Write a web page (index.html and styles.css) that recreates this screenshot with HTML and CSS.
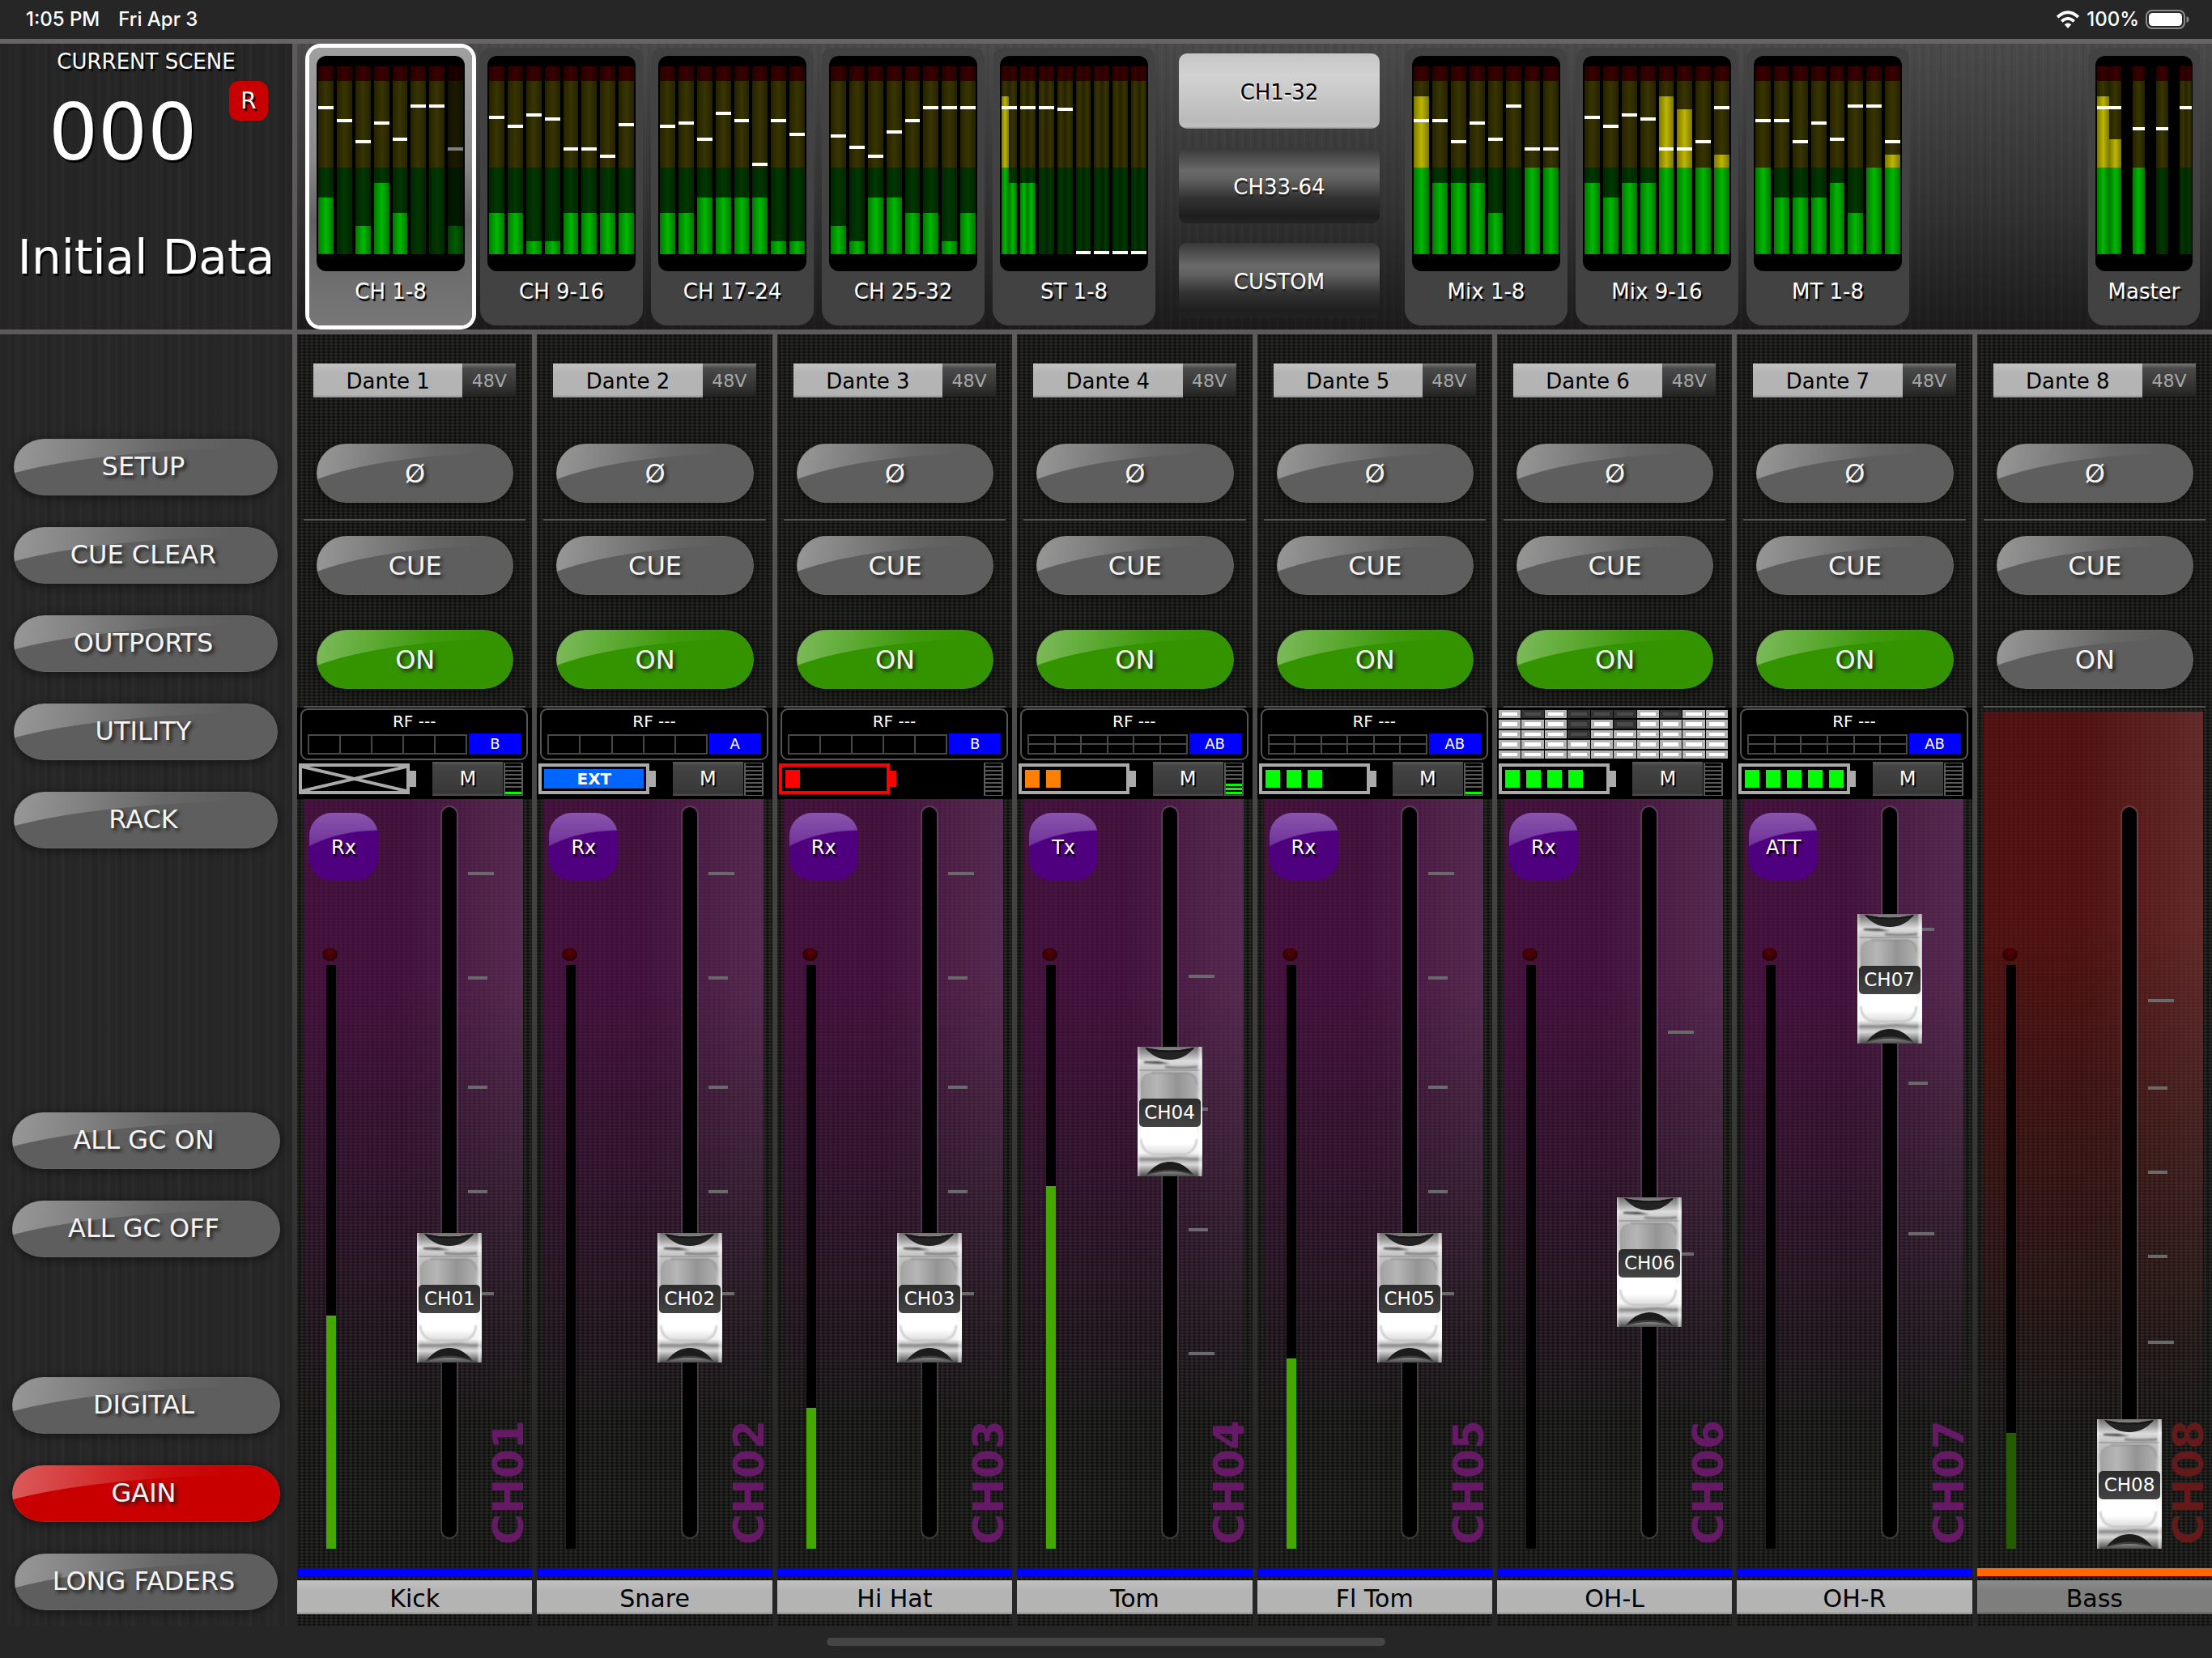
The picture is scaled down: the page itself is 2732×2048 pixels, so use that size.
FILE: index.html
```html
<!DOCTYPE html>
<html lang="en">
<head>
<meta charset="utf-8">
<meta name="viewport" content="width=device-width, initial-scale=1">
<title>Mixer</title>
<link rel="stylesheet" href="styles.css">
</head>
<body>
<svg class="defs" width="0" height="0" aria-hidden="true">
  <defs>
    <linearGradient id="capBody" x1="0" y1="0" x2="0" y2="1">
      <stop offset="0" stop-color="#6e6e6e"/>
      <stop offset=".05" stop-color="#9a9a9a"/>
      <stop offset=".11" stop-color="#dcdcdc"/>
      <stop offset=".17" stop-color="#c4c4c4"/>
      <stop offset=".3" stop-color="#b4b4b4"/>
      <stop offset=".45" stop-color="#c8c8c8"/>
      <stop offset=".62" stop-color="#f2f2f2"/>
      <stop offset=".7" stop-color="#ffffff"/>
      <stop offset=".82" stop-color="#f4f4f4"/>
      <stop offset=".87" stop-color="#aaaaaa"/>
      <stop offset=".91" stop-color="#d8d8d8"/>
      <stop offset=".96" stop-color="#8a8a8a"/>
      <stop offset="1" stop-color="#4c4c4c"/>
    </linearGradient>
    <linearGradient id="capUpper" x1="0" y1="0" x2="1" y2="0">
      <stop offset="0" stop-color="#a2a2a2"/>
      <stop offset=".3" stop-color="#b6b6b6"/>
      <stop offset=".65" stop-color="#949494"/>
      <stop offset="1" stop-color="#b0b0b0"/>
    </linearGradient>
    <linearGradient id="capLower" x1="0" y1="0" x2="0" y2="1">
      <stop offset="0" stop-color="#ffffff"/>
      <stop offset=".6" stop-color="#ffffff"/>
      <stop offset="1" stop-color="#dadada"/>
    </linearGradient>
    <linearGradient id="capEdge" x1="0" y1="0" x2="1" y2="0">
      <stop offset="0" stop-color="#fff" stop-opacity=".55"/>
      <stop offset=".05" stop-color="#fff" stop-opacity="0"/>
      <stop offset=".92" stop-color="#fff" stop-opacity="0"/>
      <stop offset=".97" stop-color="#fff" stop-opacity=".6"/>
      <stop offset="1" stop-color="#fff" stop-opacity=".2"/>
    </linearGradient>
    <filter id="capSoft" filterUnits="userSpaceOnUse" x="0" y="0" width="80" height="160"><feGaussianBlur stdDeviation="1.3"/></filter>
    <symbol id="cap" viewBox="0 0 80 160">
      <rect width="80" height="160" fill="url(#capBody)"/>
      <path d="M8 18H26L40 21H24L8 20Z" fill="#3c3c3c" filter="url(#capSoft)"/>
      <path d="M34 25Q50 27 74 25" fill="none" stroke="#808080" stroke-width="3" filter="url(#capSoft)"/>
      <path d="M2 29H78" stroke="#9a9a9a" stroke-width="1.500"/>
      <path d="M4 64V44Q5 33 17 32H62Q72 34 73 46V64Z" fill="url(#capUpper)"/>
      <path d="M17 32H62Q72 34 73 46" fill="none" stroke="#8a8a8a" stroke-width="1.500" filter="url(#capSoft)"/>
      <path d="M4 99H73V113Q71 131 58 133H20Q6 131 4 114Z" fill="url(#capLower)"/>
      <path d="M4 114Q6 131 20 133H58Q71 131 73 114" fill="none" stroke="#bcbcbc" stroke-width="2" filter="url(#capSoft)"/>
      <path d="M2 139H30Q50 136 66 139H78" fill="none" stroke="#8c8c8c" stroke-width="3" filter="url(#capSoft)"/>
      <rect width="80" height="160" fill="url(#capEdge)"/>
      <path d="M9 1Q21 16 40 16Q58 16 70 1Q40 8 9 1Z" fill="#232323"/>
      <path d="M9 1Q40 8 70 1L68 4Q40 9 12 4Z" fill="#161616"/>
      <path d="M12 157Q24 142 40 142Q56 142 68 157Q40 149 12 157Z" fill="#1c1c1c"/>
      <path d="M10 159Q40 149 70 159L68 157Q40 146 12 157Z" fill="#3c3c3c"/>
    </symbol>
  </defs>
</svg>

<header class="status">
  <div class="status-left"><span>1:05 PM</span><span>Fri Apr 3</span></div>
  <div class="status-right">
    <svg class="wifi" viewBox="0 0 30 22" aria-label="Wi-Fi">
      <path d="M15 22L10.800 17.200Q15 13.800 19.200 17.200Z" fill="#fff"/>
      <path d="M7.300 13.400Q15 6.400 22.700 13.400" fill="none" stroke="#fff" stroke-width="3.600"/>
      <path d="M2.200 8.200Q15 -3.600 27.800 8.200" fill="none" stroke="#fff" stroke-width="3.800"/>
    </svg>
    <span>100%</span>
    <svg class="power" viewBox="0 0 54 24" aria-label="Battery">
      <rect x="1" y="1" width="47" height="22" rx="7" fill="none" stroke="#8a8a8a" stroke-width="2"/>
      <rect x="4" y="4" width="41" height="16" rx="4.500" fill="#fff"/>
      <path d="M50.500 8Q53.500 9 53.500 12T50.500 16Z" fill="#8a8a8a"/>
    </svg>
  </div>
</header>

<main class="console">
  <section class="scene">
    <h1 class="scene-title">CURRENT SCENE</h1>
    <div class="scene-row">
      <span class="scene-number">000</span>
      <span class="scene-flag">R</span>
    </div>
    <p class="scene-name">Initial Data</p>
  </section>

  <section class="banks">
    <div class="bank-group" id="inputBanks"></div>
    <div class="pages">
      <button type="button" class="page page-on">CH1-32</button>
      <button type="button" class="page">CH33-64</button>
      <button type="button" class="page">CUSTOM</button>
    </div>
    <div class="bank-group" id="outputBanks"></div>
    <div class="bank-group bank-master" id="masterBank"></div>
  </section>

  <nav class="side">
    <div class="side-top">
      <button type="button" class="pill">SETUP</button>
      <button type="button" class="pill">CUE CLEAR</button>
      <button type="button" class="pill">OUTPORTS</button>
      <button type="button" class="pill">UTILITY</button>
      <button type="button" class="pill">RACK</button>
    </div>
    <div class="side-mid">
      <button type="button" class="pill">ALL GC ON</button>
      <button type="button" class="pill">ALL GC OFF</button>
    </div>
    <div class="side-end">
      <button type="button" class="pill">DIGITAL</button>
      <button type="button" class="pill pill-red">GAIN</button>
      <button type="button" class="pill pill-last">LONG FADERS</button>
    </div>
  </nav>

  <section class="strips" id="strips"></section>
</main>

<footer class="home"><span class="home-bar"></span></footer>
<script src="app.js"></script>
</body>
</html>
```
FILE: styles.css
```css
* { box-sizing: border-box; }

html, body { margin: 0; min-height: 100%; }

body {
  min-height: 100vh;
  display: grid;
  grid-template-rows: 54px 1fr 40px;
  background: #262626;
  color: #fff;
  font-family: Verdana, "DejaVu Sans", sans-serif;
}

button {
  margin: 0;
  padding: 0;
  border: 0;
  color: inherit;
  font: inherit;
  cursor: pointer;
}

h1, h2, p { margin: 0; font-weight: 400; }

.defs { position: absolute; }

/* status bar */
.status {
  display: flex;
  justify-content: space-between;
  align-items: center;
  padding: 0 28px 0 32px;
  border-bottom: 6px solid #666464;
  font: 500 24px/48px Inter, sans-serif;
}
.status-left { display: flex; gap: 23px; }
.status-right { display: flex; align-items: center; gap: 8px; }
.status svg { display: block; }
.wifi { width: 30px; height: 22px; }
.power { width: 54px; height: 24px; }

/* main frame: the gaps show the panel separators */
.console {
  display: grid;
  grid-template-columns: 361px 1fr;
  grid-template-rows: 353px 1fr;
  gap: 6px;
  background: linear-gradient(#5c5a5a 0, #5c5a5a 22%, #262626 92%);
}

.scene, .banks, .side {
  background-image:
    repeating-linear-gradient(90deg, rgba(255,255,255,.016) 0 2px, transparent 2px 5px, rgba(0,0,0,.05) 5px 7px, transparent 7px 11px),
    repeating-linear-gradient(90deg, rgba(0,0,0,.05) 0 4px, transparent 4px 17px, rgba(255,255,255,.012) 17px 21px, transparent 21px 29px);
  background-color: #262626;
}

.scene {
  display: grid;
  grid-template-rows: 46px 1fr 119px;
  text-shadow: 2px 3px 1px #000;
}
.scene-title { font-size: 26px; line-height: 44px; text-align: center; }
.scene-row {
  display: flex;
  justify-content: space-between;
  align-items: flex-start;
  padding: 0 30px 0 60px;
}
.scene-number { font-size: 96px; line-height: 128px; }
.scene-flag {
  width: 48px;
  border-radius: 12px;
  background: #c80000;
  font-size: 28px;
  line-height: 49px;
  text-align: center;
}
.scene-name { font-size: 58px; line-height: 60px; text-align: center; white-space: nowrap; }

/* meter banks */
.banks {
  display: flex;
  padding: 5px 15px;
  background-image:
    repeating-linear-gradient(90deg, rgba(255,255,255,.02) 0 2px, transparent 2px 5px, rgba(0,0,0,.05) 5px 7px, transparent 7px 11px),
    linear-gradient(#4a4a4a, #333 55%, #1b1b1b);
}
.bank-group { display: flex; gap: 10px; }
.bank-master { margin-left: auto; }
.bank {
  width: 201px;
  padding: 10px 9px 0;
  display: flex;
  flex-direction: column;
  border-radius: 14px 14px 20px 20px;
  background: #424242;
  text-shadow: 2px 3px 1px #000;
}
.bank-on {
  background: linear-gradient(#a0a0a0, #8a8a8a 40%, #626262 62%, #787878);
  box-shadow: 0 0 0 5px #fff;
  border-radius: 14px;
}
.bank-narrow { width: 138px; }
.bank-screen {
  height: 266px;
  padding: 13px 2px 21px;
  border-radius: 12px;
  background: #000;
  display: grid;
  grid-auto-flow: column;
  grid-auto-columns: 1fr;
  gap: 4px;
}
.bank-narrow .bank-screen { grid-template-columns: 30px 15px 15px 15px; gap: 14px; }
.bank-label { font-size: 26px; line-height: 50px; white-space: nowrap; text-align: center; }
.cell { position: relative; display: flex; }
.bar {
  flex: 1;
  display: flex;
  align-items: flex-end;
  background:
    linear-gradient(90deg, rgba(0,0,0,.35), transparent 50%, rgba(0,0,0,.35)),
    linear-gradient(#3a0000 0 18px, #383500 18px 125px, #003800 125px);
}
.lit {
  width: 100%;
  background:
    linear-gradient(90deg, rgba(0,0,0,.35), transparent 50%, rgba(0,0,0,.35)) bottom / 100% 232px no-repeat,
    linear-gradient(#d00000 0 18px, #bdb600 18px 125px, #00b800 125px) bottom / 100% 232px no-repeat;
}
.mark { position: absolute; left: 0; right: 0; height: 4px; margin-bottom: -2px; background: #fff; }
.cell-dim { opacity: .5; }

/* page selector */
.pages { display: flex; flex-direction: column; gap: 24px; width: 248px; margin: 7px 31px 0 29px; }
.page {
  height: 93px;
  border-radius: 10px;
  background: linear-gradient(#383838, #6a6a6a 30%, #606060 42%, #333 66%, #1e1e1e 90%, #232323);
  font-size: 26px;
  line-height: 96px;
  text-shadow: 1px 3px 1px #222;
}
.page-on {
  background: linear-gradient(#c6c6c6, #d2d2d2 30%, #bababa 90%, #c0c0c0 97%, #8a8a8a);
  color: #000;
  text-shadow: -1px 2px 1px #fff;
}

/* glossy pill buttons */
.pill {
  height: 70px;
  width: 100%;
  border-radius: 38px / 35px;
  background:
    radial-gradient(120% 100% at 100% 115%, var(--fill, #5e5e5e) 99%, transparent),
    linear-gradient(100deg, rgba(255,255,255,.36), rgba(255,255,255,.06) 55%, transparent 80%),
    var(--fill, #5e5e5e);
  box-shadow: 0 2px 10px 2px rgba(0,0,0,.4), inset 0 0 0 1px rgba(120,120,120,.25);
  color: #f4f4f4;
  font-size: 32px;
  line-height: 66px;
  text-align: center;
  text-shadow: 3px 3px 4px #1a1a1a;
  white-space: nowrap;
}
.pill-red { --fill: #c80000; }
.pill-green { --fill: #349400; }

.side {
  display: flex;
  flex-direction: column;
  padding: 129px 15px 19px;
  background-color: #272727;
}
.side .pill { padding: 0 6px 3px 0; }
.side-top, .side-mid, .side-end { display: flex; flex-direction: column; gap: 39px; }
.side-top { padding: 0 3px 0 2px; }
.side-mid { margin-top: auto; }
.side-end { margin-top: 148px; }
.pill-last { width: auto; margin: 0 3px; }

/* channel strips */
.strips {
  display: grid;
  grid-template-columns: repeat(8, 1fr);
  gap: 6px;
}
.strip {
  position: relative;
  min-width: 0;
  display: flex;
  flex-direction: column;
  padding-bottom: 14px;
  background:
    radial-gradient(ellipse 3px 2px, rgba(0,0,0,.6), transparent) 0 0 / 6px 4px,
    radial-gradient(ellipse 3px 2px, rgba(255,255,255,.09), transparent) 3px 2px / 6px 4px,
    #1a1a18;
}
.head { padding: 36px 20px 0; display: flex; }
.patch {
  flex: 1;
  height: 42px;
  padding: 2px 0 0;
  background: linear-gradient(#c2c2c2, #b4b4b4 30%, #b4b4b4 92%, #8e8e8e);
  color: #000;
  font-size: 26px;
}
.phantom {
  width: 66px;
  height: 41px;
  padding: 2px 0 0;
  background: linear-gradient(#777, #4a4a4a 15%, #333 70%, #222);
  color: #a8a8a8;
  font-size: 22px;
}
.keys { padding: 57px 8px 0; display: grid; grid-template-rows: 73px 41px 73px 43px 73px 21px 2px; }
.keys .pill { height: 73px; width: auto; margin: 0 15px 0 16px; font-size: 32px; line-height: 74px; border-radius: 37px; }
.rule { height: 2px; align-self: center; background: #555; }
.keys > :nth-child(1) { grid-row: 1; }
.keys > :nth-child(2) { grid-row: 2; }
.keys > :nth-child(3) { grid-row: 3; }
.keys > :nth-child(4) { grid-row: 5; }
.keys > :nth-child(5) { grid-row: 7; }

/* wireless receiver block */
.radio { height: 113px; display: flex; flex-direction: column; }
.radio-on { background: #000; }
.rf {
  height: 64px;
  margin: 1px 5px 0 4px;
  padding: 4px 7px 0;
  border: 2px solid #555;
  border-radius: 9px;
}
.rf-title { font-size: 20px; line-height: 20px; text-align: center; }
.rf-row { display: flex; align-items: center; gap: 2px; height: 26px; margin-top: 5px; }
.rf-grid {
  flex: 1;
  height: 25px;
  display: grid;
  grid-template-columns: repeat(5, 1fr);
  gap: 2px;
  padding: 2px;
  background: #484848;
}
.rf-grid i { background: #000; }
.rf-grid-dual { grid-template-columns: repeat(6, 1fr); }
.rf-bank {
  width: 64px;
  background: #00f;
  font-size: 18px;
  line-height: 26px;
  text-align: center;
}
.history {
  height: 60px;
  margin: 3px 5px 2px 2px;
  display: grid;
  grid-template-columns: repeat(10, 1fr);
  gap: 2px 1px;
}
.history i { border: 2px solid #b4b4b4; border-width: 3px 4px; background: #fff; }
.history .off { border-color: #333; background: #4a4a4a; }
.power-row { display: flex; height: 42px; margin: 2px 11px 0 2px; align-items: center; }
.cells { display: flex; width: 145px; height: 38px; color: #aaa; }
.cells-body { flex: 1; display: flex; gap: 8px; padding: 4px; border: 4px solid currentColor; }
.cells-body svg { flex: 1; min-width: 0; margin: -4px; }
.cells-body i { width: 18px; }
.cells-nub { width: 8px; height: 20px; align-self: center; background: currentColor; }
.ext {
  flex: 1;
  margin: -1px;
  background: #06f;
  color: #fff;
  font-size: 20px;
  font-weight: 700;
  line-height: 24px;
  text-align: center;
}
.cells-low { color: #f00; }
.mute {
  width: 87px;
  height: 42px;
  margin-left: auto;
  background: linear-gradient(#5a5a5a, #444 12%, #373737 92%, #555);
  font-size: 24px;
  text-shadow: 2px 2px 0 #000;
}
.ladder {
  width: 24px;
  height: 41px;
  margin-left: 1px;
  padding: 0 0 1px;
  display: flex;
  flex-direction: column-reverse;
  gap: 2px;
  border: solid #5a5a5a;
  border-width: 1px 2px;
  overflow: hidden;
}
.ladder-alone { margin-left: auto; }
.ladder i { height: 3px; flex: none; box-shadow: 0 -2px #5a5a5a; }
.ladder .lit-seg { background: #0f0; box-shadow: none; }

/* fader area */
.fader {
  position: relative;
  flex: 1;
  display: grid;
  grid-template-columns: 85px 1fr 18px 46px;
  padding: 0 47px 0 15px;
}
.fader::before {
  content: "";
  position: absolute;
  inset: 0 11px 180px 8px;
  background:
    linear-gradient(90deg, transparent 45%, rgba(255,255,255,.1)),
    var(--tint, rgba(84, 16, 76, .7));
  -webkit-mask-image: linear-gradient(#000 30%, rgba(0,0,0,.5) 65%, transparent);
  mask-image: linear-gradient(#000 30%, rgba(0,0,0,.5) 65%, transparent);
}
.fader-red { --tint: rgba(104, 16, 16, .7); }
.fader-red::before { top: -108px; }
.level-col { position: relative; display: grid; grid-template-rows: 184px 16px 1fr; }
.io {
  width: 85px;
  height: 84px;
  margin-top: 17px;
  padding: 2px 0 0;
  border-radius: 28px;
  background:
    radial-gradient(150% 90% at 100% 115%, #4e007e 98%, transparent),
    linear-gradient(#8a55ac, #6a2a96 60%);
  font-size: 24px;
  text-shadow: 2px 3px 1px #000;
}
.clip {
  grid-row: 2;
  width: 19px;
  margin-left: 16px;
  border-radius: 50%;
  background: radial-gradient(circle at 50% 35%, #5a0008, #2a0004 75%);
}
.level {
  grid-row: 3;
  width: 12px;
  margin: 5px 0 24px 21px;
  display: flex;
  align-items: flex-end;
  background: #000;
}
.level i { width: 100%; background: #45a800; }
.level .dim { background: #265c00; }
.travel { grid-column: 3; position: relative; z-index: 1; margin: 10px 0 24px; }
.travel::before {
  content: "";
  position: absolute;
  inset: 0 0 14px;
  border-radius: 9px;
  background: #000;
  box-shadow: 0 0 0 2px rgba(150,140,150,.28);
}
.travel input {
  -webkit-appearance: none;
  appearance: none;
  writing-mode: vertical-lr;
  direction: rtl;
  position: absolute;
  left: -31px;
  top: 0;
  width: 80px;
  height: 100%;
  margin: 0;
  background: transparent;
  cursor: pointer;
}
.travel input::-webkit-slider-runnable-track { background: transparent; }
.travel input::-webkit-slider-thumb {
  -webkit-appearance: none;
  width: 80px;
  height: 160px;
  background: transparent;
}
.cap { position: absolute; left: -31px; width: 80px; height: 160px; pointer-events: none; }
.cap svg { display: block; width: 80px; height: 160px; }
.cap-label {
  position: absolute;
  left: 2px;
  right: 2px;
  top: 64px;
  height: 35px;
  border-radius: 5px;
  background: linear-gradient(#2c2c2c, #444);
  font-size: 23px;
  line-height: 35px;
  text-align: center;
}
.ticks { position: relative; margin: 10px 0 24px 14px; }
.ticks i { position: absolute; left: 0; width: 24px; height: 4px; margin-top: -2px; background: #6a6a6a; }
.ticks .long { width: 32px; }
.tag {
  position: absolute;
  right: 3px;
  bottom: 29px;
  writing-mode: vertical-rl;
  transform: rotate(180deg);
  color: #661a66;
  font-size: 52px;
  font-weight: 700;
  line-height: 52px;
}
.fader-red .tag { color: #641a1a; }

.color { height: 10px; background: #00f; }
.color-orange { background: #f60; }
.name {
  height: 42px;
  margin-top: 5px;
  padding: 2px 0 0;
  background: linear-gradient(#c2c2c2, #b4b4b4 30%, #b4b4b4 92%, #8e8e8e);
  color: #000;
  font-size: 30px;
}
.name-off { background: linear-gradient(#8c8c8c, #7e7e7e 30%, #7e7e7e 92%, #555); }

.home { display: flex; justify-content: center; align-items: center; }
.home-bar { width: 690px; height: 10px; border-radius: 5px; background: #454545; }
```
FILE: app.js
```js
// Meter banks: one entry per channel, [level, mark] in percent; a stereo level is a pair.
const inputBanks = [
  { label: 'CH 1-8', on: true, dimLast: true,
    levels: [30, 0, 15, 38, 22, 0, 0, 15], marks: [78, 71, 60, 70, 61, 79, 79, 56] },
  { label: 'CH 9-16',
    levels: [22, 22, 7, 7, 22, 22, 22, 22], marks: [73, 68, 74, 72, 56, 56, 52, 69] },
  { label: 'CH 17-24',
    levels: [22, 22, 30, 30, 30, 30, 7, 7], marks: [68, 70, 61, 75, 71, 48, 71, 64] },
  { label: 'CH 25-32',
    levels: [15, 7, 30, 30, 22, 22, 7, 22], marks: [63, 57, 52, 65, 71, 78, 78, 78] },
  { label: 'ST 1-8',
    levels: [[84, 38], [38, 38], [0, 0], [0, 0], [0, 0], [0, 0], [0, 0], [0, 0]],
    marks: [78, 78, 78, 77, 1, 1, 1, 1] },
];
const outputBanks = [
  { label: 'Mix 1-8',
    levels: [84, 38, 38, 38, 22, 0, 46, 46], marks: [71, 71, 60, 70, 61, 79, 56, 56] },
  { label: 'Mix 9-16',
    levels: [38, 30, 38, 38, 84, 77, 46, 53], marks: [73, 68, 74, 72, 56, 56, 60, 78] },
  { label: 'MT 1-8',
    levels: [46, 30, 30, 30, 38, 22, 46, 53], marks: [71, 71, 60, 70, 61, 79, 79, 60] },
];
const masterBank = [
  { label: 'Master', narrow: true,
    levels: [[84, 61], 46, 0, [0, 0]], marks: [78, 67, 67, 78] },
];

const bankHtml = b => `
  <button type="button" class="bank${b.on ? ' bank-on' : ''}${b.narrow ? ' bank-narrow' : ''}">
    <span class="bank-screen">${b.levels.map((level, i) => `
      <span class="cell${b.dimLast && i === b.levels.length - 1 ? ' cell-dim' : ''}">
        ${[].concat(level).map(v => `<span class="bar"><span class="lit" style="height:${v}%"></span></span>`).join('')}
        <span class="mark" style="bottom:${b.marks[i]}%"></span>
      </span>`).join('')}
    </span>
    <span class="bank-label">${b.label}</span>
  </button>`;

const fill = (id, html) => { document.getElementById(id).innerHTML = html; };
fill('inputBanks', inputBanks.map(bankHtml).join(''));
fill('outputBanks', outputBanks.map(bankHtml).join(''));
fill('masterBank', masterBank.map(bankHtml).join(''));

// Scale marks beside the fader: [position in percent from the top, long mark?]
const scaleLow = [[9, 1], [23, 0], [37.8, 0], [51.9, 0], [65.6, 1]];
const channels = [
  { name: 'Kick', io: 'Rx', bank: 'B', battery: 'none', mute: 1, seg: 1, level: 40, pos: 30.4, scale: scaleLow },
  { name: 'Snare', io: 'Rx', bank: 'A', battery: 'ext', mute: 1, seg: 0, level: 0, pos: 30.4, scale: scaleLow },
  { name: 'Hi Hat', io: 'Rx', bank: 'B', battery: 1, color: '#f00', low: 1, seg: 0, level: 24.1, pos: 30.4, scale: scaleLow },
  { name: 'Tom', io: 'Tx', bank: 'AB', battery: 2, color: '#ff8000', mute: 1, seg: 3, level: 62.1, pos: 60.8,
    scale: [[22.8, 1], [40.7, 0], [57, 0], [73.7, 1]] },
  { name: 'Fl Tom', io: 'Rx', bank: 'AB', battery: 3, color: '#0f0', mute: 1, seg: 1, level: 32.6, pos: 30.4, scale: scaleLow },
  { name: 'OH-L', io: 'Rx', history: 1, battery: 4, color: '#0f0', mute: 1, seg: 0, level: 0, pos: 36.2,
    scale: [[30.4, 1], [60.3, 1]] },
  { name: 'OH-R', io: 'ATT', bank: 'AB', battery: 5, color: '#0f0', mute: 1, seg: 0, level: 0, pos: 82.5,
    scale: [[16.5, 1], [37.2, 0], [57.5, 1]] },
  { name: 'Bass', red: 1, off: 1, level: 19.8, pos: 0,
    scale: [[26.1, 1], [37.9, 0], [49.2, 0], [60.6, 0], [72.2, 1]] },
];

const historyOff = [1, 3, 4, 5, 7, 13, 15, 23];
const repeat = (n, fn) => Array.from({ length: n }, (_, i) => fn(i)).join('');

function rfHtml(c) {
  if (c.history) {
    return `<div class="history">${repeat(50, i => `<i${historyOff.includes(i) ? ' class="off"' : ''}></i>`)}</div>`;
  }
  const dual = c.bank === 'AB';
  return `<div class="rf">
    <div class="rf-title">RF ---</div>
    <div class="rf-row">
      <div class="rf-grid${dual ? ' rf-grid-dual' : ''}">${repeat(dual ? 12 : 5, () => '<i></i>')}</div>
      <div class="rf-bank">${c.bank}</div>
    </div>
  </div>`;
}

function batteryHtml(c) {
  if (c.battery === 'none') {
    return `<svg viewBox="0 0 129 30" preserveAspectRatio="none"><path d="M0 0L129 30M129 0L0 30" stroke="#aaa" stroke-width="4"/></svg>`;
  }
  if (c.battery === 'ext') return '<span class="ext">EXT</span>';
  return repeat(c.battery, () => `<i style="background:${c.color}"></i>`);
}

function radioHtml(c) {
  if (!c.io) return '<div class="radio"></div>';
  return `<div class="radio radio-on">
    ${rfHtml(c)}
    <div class="power-row">
      <div class="cells${c.low ? ' cells-low' : ''}">
        <div class="cells-body">${batteryHtml(c)}</div>
        <div class="cells-nub"></div>
      </div>
      ${c.mute ? '<button type="button" class="mute">M</button>' : ''}
      <div class="ladder${c.mute ? '' : ' ladder-alone'}">${repeat(8, i => `<i${i < c.seg ? ' class="lit-seg"' : ''}></i>`)}</div>
    </div>
  </div>`;
}

fill('strips', channels.map((c, i) => {
  const id = `CH0${i + 1}`;
  return `<article class="strip">
    <div class="head">
      <button type="button" class="patch">Dante ${i + 1}</button>
      <button type="button" class="phantom">48V</button>
    </div>
    <div class="keys">
      <button type="button" class="pill">Ø</button>
      <div class="rule"></div>
      <button type="button" class="pill">CUE</button>
      <button type="button" class="pill${c.off ? '' : ' pill-green'}">ON</button>
      <div class="rule"></div>
    </div>
    ${radioHtml(c)}
    <div class="fader${c.red ? ' fader-red' : ''}">
      <div class="level-col">
        ${c.io ? `<button type="button" class="io">${c.io}</button>` : ''}
        <span class="clip"></span>
        <span class="level"><i${c.off ? ' class="dim"' : ''} style="height:${c.level}%"></i></span>
      </div>
      <div class="travel">
        <input type="range" min="0" max="100" step="0.1" value="${c.pos}" aria-label="${id} level">
        <div class="cap" style="bottom:calc((100% - 160px) * ${c.pos / 100})">
          <svg><use href="#cap"/></svg>
          <span class="cap-label">${id}</span>
        </div>
      </div>
      <div class="ticks">${c.scale.map(([y, long]) => `<i${long ? ' class="long"' : ''} style="top:${y}%"></i>`).join('')}</div>
      <span class="tag">${id}</span>
    </div>
    <div class="color${c.red ? ' color-orange' : ''}"></div>
    <button type="button" class="name${c.off ? ' name-off' : ''}">${c.name}</button>
  </article>`;
}).join(''));

// Keep the drawn cap under the pointer while its slider moves.
document.querySelectorAll('.travel input').forEach(input => {
  input.addEventListener('input', () => {
    input.nextElementSibling.style.bottom = `calc((100% - 160px) * ${input.value / 100})`;
  });
});
```
